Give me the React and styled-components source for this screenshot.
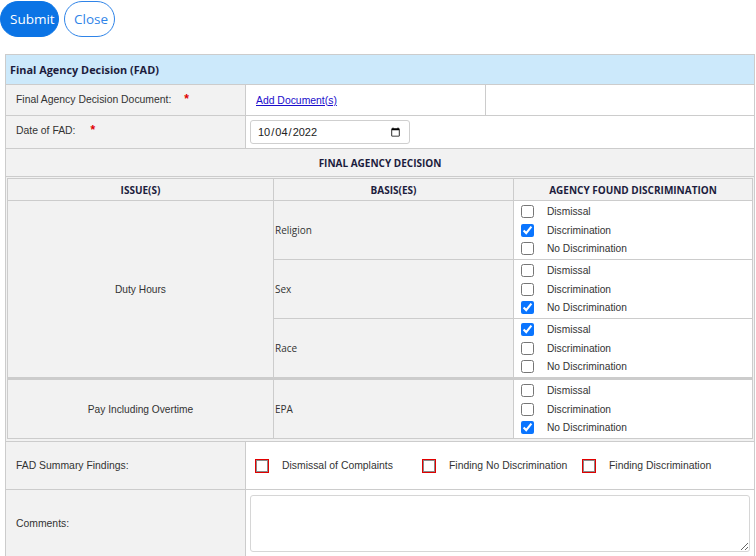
import styled, { createGlobalStyle } from 'styled-components';

const GlobalStyle = createGlobalStyle`
  body {
    margin: 0;
    font-family: "Liberation Sans", Arial, sans-serif;
    color: #333;
    background: #fff;
  }
`;

const decisions = [
    {
        issue: 'Duty Hours',
        bases: [
            { name: 'Religion', checked: 'Discrimination' },
            { name: 'Sex', checked: 'No Discrimination' },
            { name: 'Race', checked: 'Dismissal' },
        ],
    },
    {
        issue: 'Pay Including Overtime',
        bases: [
            { name: 'EPA', checked: 'No Discrimination' },
        ],
    },
];

const options = ['Dismissal', 'Discrimination', 'No Discrimination'];

const summaryOptions = [
    { label: 'Dismissal of Complaints', width: 167 },
    { label: 'Finding No Discrimination', width: 160 },
    { label: 'Finding Discrimination' },
];

export default function App() {
    return (
        <>
            <GlobalStyle />
            <App.Toolbar>
                <App.SubmitButton>Submit</App.SubmitButton>
                <App.CloseButton>Close</App.CloseButton>
            </App.Toolbar>

            <App.Table>
                <colgroup>
                    <App.Col $width={240} />
                    <App.Col $width={240} />
                    <App.Col />
                </colgroup>
                <tbody>
                    <tr>
                        <App.Title colSpan={3}>Final Agency Decision (FAD)</App.Title>
                    </tr>
                    <tr>
                        <App.Label $top>
                            Final Agency Decision Document:<App.Required $gap={13}>*</App.Required>
                        </App.Label>
                        <App.Value>
                            <App.Link href="#">Add Document(s)</App.Link>
                        </App.Value>
                        <App.Value />
                    </tr>
                    <tr>
                        <App.Label $top $height={33}>
                            Date of FAD:<App.Required $gap={15}>*</App.Required>
                        </App.Label>
                        <App.Value colSpan={2}>
                            <App.DateInput type="date" defaultValue="2022-10-04" />
                        </App.Value>
                    </tr>
                    <tr>
                        <App.SectionTitle colSpan={3}>FINAL AGENCY DECISION</App.SectionTitle>
                    </tr>
                    <tr>
                        <App.Holder colSpan={3}>
                            <App.Inner>
                                <colgroup>
                                    <App.Col $width={266} />
                                    <App.Col $width={240} />
                                    <App.Col />
                                </colgroup>
                                <thead>
                                    <tr>
                                        <App.HeadCell>ISSUE(S)</App.HeadCell>
                                        <App.HeadCell>BASIS(ES)</App.HeadCell>
                                        <App.HeadCell>AGENCY FOUND DISCRIMINATION</App.HeadCell>
                                    </tr>
                                </thead>
                                {decisions.map((group, g) => (
                                    <App.Group key={group.issue} $first={g === 0}>
                                        {group.bases.map((basis, i) => (
                                            <tr key={basis.name}>
                                                {i === 0 &&
                                                    <App.IssueCell rowSpan={group.bases.length}>
                                                        {group.issue}
                                                    </App.IssueCell>
                                                }
                                                <App.BasisCell>{basis.name}</App.BasisCell>
                                                <App.AgencyCell>
                                                    {options.map(option => (
                                                        <App.Option key={option}>
                                                            <App.Check type="checkbox" defaultChecked={basis.checked === option} />
                                                            {option}
                                                        </App.Option>
                                                    ))}
                                                </App.AgencyCell>
                                            </tr>
                                        ))}
                                    </App.Group>
                                ))}
                            </App.Inner>
                        </App.Holder>
                    </tr>
                    <tr>
                        <App.Label $height={48}>FAD Summary Findings:</App.Label>
                        <App.Value colSpan={2}>
                            <App.Findings>
                                {summaryOptions.map(option => (
                                    <App.Finding key={option.label} $width={option.width}>
                                        <App.RedCheck type="checkbox" />
                                        {option.label}
                                    </App.Finding>
                                ))}
                            </App.Findings>
                        </App.Value>
                    </tr>
                    <tr>
                        <App.Label $height={67}>Comments:</App.Label>
                        <App.Value colSpan={2}>
                            <App.Comments />
                        </App.Value>
                    </tr>
                </tbody>
            </App.Table>
        </>
    );
}

App.Toolbar = styled.div`
  display: flex;
  gap: 5px;
  padding-top: 1px;
  height: 36px;
`;

const Button = styled.button`
  height: 36px;
  padding: 0 9px;
  border-radius: 18px;
  font-family: "Open Sans", sans-serif;
  font-size: 13.5px;
  cursor: pointer;
`;

App.SubmitButton = styled(Button)`
  width: 59px;
  color: #fff;
  background-color: #0b74e5;
  border: 1px solid #0b74e5;
`;

App.CloseButton = styled(Button)`
  width: 51px;
  color: #2f84e8;
  background-color: #fff;
  border: 1px solid #2f84e8;
`;

App.Col = styled.col`
  width: ${p => p.$width ? `${p.$width}px` : 'auto'};
`;

App.Table = styled.table`
  margin: 17px 0 0 5px;
  width: 750px;
  border-collapse: collapse;
  table-layout: fixed;
  font-size: 10.4px;

  & td {
    border: 1px solid #cccccc;
  }
`;

App.Title = styled.td`
  height: 29px;
  padding: 0 0 0 4px;
  background-color: #cce9fb;
  font-family: "Open Sans", sans-serif;
  font-weight: 700;
  font-size: 10.9px;
  color: #1c1c3d;
`;

App.Label = styled.td`
  height: ${p => p.$height || 31}px;
  padding: ${p => p.$top ? '7px 0 0 10px' : '0 0 0 10px'};
  vertical-align: ${p => p.$top ? 'top' : 'middle'};
  background-color: #f2f2f2;
  color: #333;
  box-sizing: border-box;
`;

App.Required = styled.span`
  color: #e00000;
  font-weight: 700;
  font-size: 12px;
  margin-left: ${p => p.$gap || 12}px;
`;

App.Value = styled.td`
  padding: 0 4px;
  background-color: #fff;
`;

App.Link = styled.a`
  margin-left: 6px;
  color: #1a0dcc;
  text-decoration: underline;
  font-size: 10.4px;
`;

App.DateInput = styled.input`
  width: 160px;
  height: 24px;
  box-sizing: border-box;
  padding: 0 6px;
  border: 1px solid #cfcfcf;
  border-radius: 3px;
  font-family: "Liberation Sans", Arial, sans-serif;
  font-size: 11px;
  color: #222;
`;

App.SectionTitle = styled.td`
  height: 27px;
  padding: 0;
  text-align: center;
  background-color: #f2f2f2;
  font-family: "Open Sans", sans-serif;
  font-weight: 700;
  font-size: 10px;
  color: #1c1c3d;
`;

App.Holder = styled.td`
  padding: 1px 1px 2px 1px;
  background-color: #f2f2f2;
`;

App.Inner = styled.table`
  width: 100%;
  border-collapse: collapse;
  table-layout: fixed;
  border: 1px solid #cccccc;

  & td {
    border: 1px solid #cccccc;
  }
`;

App.HeadCell = styled.td`
  height: 21px;
  padding: 0;
  text-align: center;
  background-color: #f2f2f2;
  font-family: "Open Sans", sans-serif;
  font-weight: 700;
  font-size: 10px;
  color: #1c1c3d;
`;

App.Group = styled.tbody`
  & > tr:first-child > td {
    border-top: ${p => p.$first ? '1px' : '3px'} solid #cccccc;
  }
`;

App.IssueCell = styled.td`
  padding: 0;
  text-align: center;
  background-color: #f2f2f2;
  font-size: 10.2px;
  color: #333;
`;

App.BasisCell = styled.td`
  padding: 0 0 0 1px;
  background-color: #f2f2f2;
  font-family: "Open Sans", sans-serif;
  font-size: 10px;
  color: #333;
`;

App.AgencyCell = styled.td`
  padding: 1px 0 1px 7px;
  background-color: #fff;
`;

App.Option = styled.label`
  display: flex;
  align-items: center;
  height: 18.7px;
  font-size: 10.2px;
  color: #333;
`;

App.Check = styled.input`
  width: 13px;
  height: 13px;
  margin: 0 13px 0 0;
  accent-color: #0a75ff;
`;

App.Findings = styled.div`
  display: flex;
  align-items: center;
  padding-left: 5px;
`;

App.Finding = styled.label`
  display: flex;
  align-items: center;
  flex: 0 0 ${p => p.$width ? `${p.$width}px` : 'auto'};
  font-size: 10.4px;
  color: #333;
`;

App.RedCheck = styled.input`
  appearance: none;
  width: 14px;
  height: 14px;
  margin: 0 13px 0 0;
  border: 1px solid #e00000;
  background-color: #fff;
  box-shadow: inset 0 0 0 1px #8a8a8a;
  box-sizing: border-box;
`;

App.Comments = styled.textarea`
  display: block;
  width: 100%;
  height: 57px;
  box-sizing: border-box;
  border: 1px solid #d6d6d6;
  border-radius: 3px;
  font-family: "Liberation Sans", Arial, sans-serif;
`;
